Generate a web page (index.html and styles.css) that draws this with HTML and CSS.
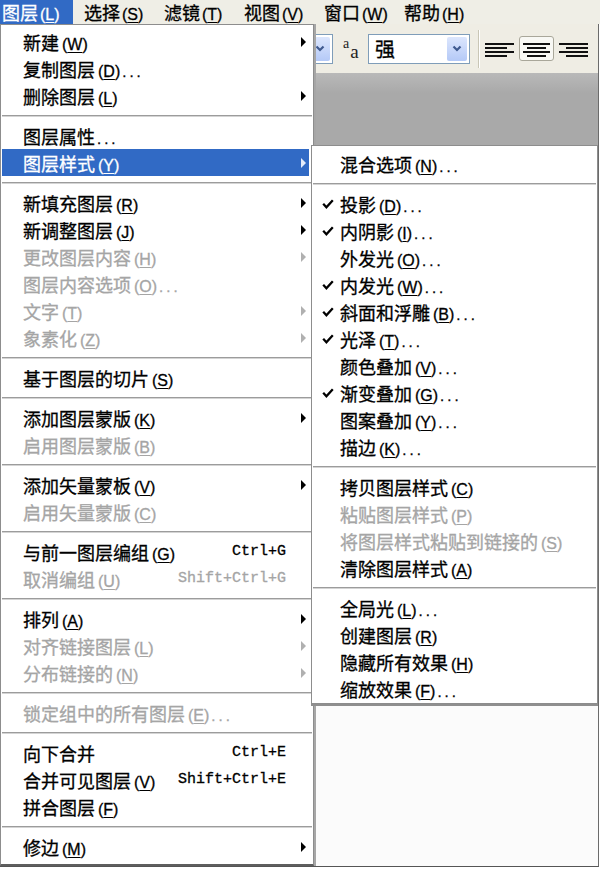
FILE: index.html
```html
<!DOCTYPE html>
<html lang="zh-CN">
  <head>
    <meta charset="UTF-8" />
    <meta name="viewport" content="width=device-width, initial-scale=1.0" />
    <title>图层菜单</title>
    <link rel="stylesheet" href="styles.css">
  </head>
  <body>
    <div class="menubar">
      <span class="mb-item active">图层<span class="k">(<u>L</u>)</span></span>
      <span class="mb-item">选择<span class="k">(<u>S</u>)</span></span>
      <span class="mb-item">滤镜<span class="k">(<u>T</u>)</span></span>
      <span class="mb-item">视图<span class="k">(<u>V</u>)</span></span>
      <span class="mb-item">窗口<span class="k">(<u>W</u>)</span></span>
      <span class="mb-item">帮助<span class="k">(<u>H</u>)</span></span>
    </div>

    <div class="toolbar">
      <div class="combo first">
        <span class="combo-btn"><svg width="10" height="7" viewBox="0 0 10 7"><path d="M1.5 1.5 L5 5 L8.5 1.5" fill="none" stroke="#3f5a8f" stroke-width="2.2"/></svg></span>
      </div>
      <span class="aa"><span class="a-sm">a</span><span class="a-lg">a</span></span>
      <div class="combo font">
        <span class="combo-text">强</span>
        <span class="combo-btn"><svg width="10" height="7" viewBox="0 0 10 7"><path d="M1.5 1.5 L5 5 L8.5 1.5" fill="none" stroke="#3f5a8f" stroke-width="2.2"/></svg></span>
      </div>
      <span class="tb-sep"></span>
      <span class="align-btn">
        <svg width="31" height="25" viewBox="0 0 31 25"><rect x="1" y="7" width="29" height="2"/><rect x="1" y="11" width="22" height="2"/><rect x="1" y="15" width="29" height="2"/><rect x="1" y="19" width="22" height="2"/></svg>
      </span>
      <span class="align-btn pressed">
        <svg width="31" height="23" viewBox="0 0 31 23"><rect x="2" y="6" width="27" height="2"/><rect x="6" y="10" width="19" height="2"/><rect x="2" y="14" width="27" height="2"/><rect x="6" y="18" width="19" height="2"/></svg>
      </span>
      <span class="align-btn">
        <svg width="31" height="25" viewBox="0 0 31 25"><rect x="1" y="7" width="29" height="2"/><rect x="8" y="11" width="22" height="2"/><rect x="1" y="15" width="29" height="2"/><rect x="8" y="19" width="22" height="2"/></svg>
      </span>
    </div>

    <div class="workspace">
      <div class="gray"></div>
      <div class="doc"></div>
    </div>

    <div class="menu main">
      <div class="item"><span class="label">新建<span class="k">(<u>W</u>)</span></span><span class="ar"><i></i></span></div>
      <div class="item"><span class="label">复制图层<span class="k">(<u>D</u>)</span><span class="dots">...</span></span><span class="ar"></span></div>
      <div class="item"><span class="label">删除图层<span class="k">(<u>L</u>)</span></span><span class="ar"><i></i></span></div>
      <div class="sep"></div>
      <div class="item"><span class="label">图层属性<span class="dots">...</span></span><span class="ar"></span></div>
      <div class="item hot"><span class="label">图层样式<span class="k">(<u>Y</u>)</span></span><span class="ar"><i></i></span></div>
      <div class="sep"></div>
      <div class="item"><span class="label">新填充图层<span class="k">(<u>R</u>)</span></span><span class="ar"><i></i></span></div>
      <div class="item"><span class="label">新调整图层<span class="k">(<u>J</u>)</span></span><span class="ar"><i></i></span></div>
      <div class="item off"><span class="label">更改图层内容<span class="k">(<u>H</u>)</span></span><span class="ar"><i></i></span></div>
      <div class="item off"><span class="label">图层内容选项<span class="k">(<u>O</u>)</span><span class="dots">...</span></span><span class="ar"></span></div>
      <div class="item off"><span class="label">文字<span class="k">(<u>T</u>)</span></span><span class="ar"><i></i></span></div>
      <div class="item off"><span class="label">象素化<span class="k">(<u>Z</u>)</span></span><span class="ar"><i></i></span></div>
      <div class="sep"></div>
      <div class="item"><span class="label">基于图层的切片<span class="k">(<u>S</u>)</span></span><span class="ar"></span></div>
      <div class="sep"></div>
      <div class="item"><span class="label">添加图层蒙版<span class="k">(<u>K</u>)</span></span><span class="ar"><i></i></span></div>
      <div class="item off"><span class="label">启用图层蒙版<span class="k">(<u>B</u>)</span></span><span class="ar"></span></div>
      <div class="sep"></div>
      <div class="item"><span class="label">添加矢量蒙板<span class="k">(<u>V</u>)</span></span><span class="ar"><i></i></span></div>
      <div class="item off"><span class="label">启用矢量蒙版<span class="k">(<u>C</u>)</span></span><span class="ar"></span></div>
      <div class="sep"></div>
      <div class="item"><span class="label">与前一图层编组<span class="k">(<u>G</u>)</span></span><span class="sc">Ctrl+G</span><span class="ar"></span></div>
      <div class="item off"><span class="label">取消编组<span class="k">(<u>U</u>)</span></span><span class="sc">Shift+Ctrl+G</span><span class="ar"></span></div>
      <div class="sep"></div>
      <div class="item"><span class="label">排列<span class="k">(<u>A</u>)</span></span><span class="ar"><i></i></span></div>
      <div class="item off"><span class="label">对齐链接图层<span class="k">(<u>L</u>)</span></span><span class="ar"><i></i></span></div>
      <div class="item off"><span class="label">分布链接的<span class="k">(<u>N</u>)</span></span><span class="ar"><i></i></span></div>
      <div class="sep"></div>
      <div class="item off"><span class="label">锁定组中的所有图层<span class="k">(<u>E</u>)</span><span class="dots">...</span></span><span class="ar"></span></div>
      <div class="sep"></div>
      <div class="item"><span class="label">向下合并</span><span class="sc">Ctrl+E</span><span class="ar"></span></div>
      <div class="item"><span class="label">合并可见图层<span class="k">(<u>V</u>)</span></span><span class="sc">Shift+Ctrl+E</span><span class="ar"></span></div>
      <div class="item"><span class="label">拼合图层<span class="k">(<u>F</u>)</span></span><span class="ar"></span></div>
      <div class="sep"></div>
      <div class="item"><span class="label">修边<span class="k">(<u>M</u>)</span></span><span class="ar"><i></i></span></div>
    </div>

    <div class="menu sub">
      <div class="item"><span class="chk"></span><span class="label">混合选项<span class="k">(<u>N</u>)</span><span class="dots">...</span></span></div>
      <div class="sep"></div>
      <div class="item"><span class="chk on"><svg width="12" height="10" viewBox="0 0 12 10"><path d="M1.2 4.8 L4.4 8.2 L10.8 1.2" fill="none" stroke="#000" stroke-width="2.3"/></svg></span><span class="label">投影<span class="k">(<u>D</u>)</span><span class="dots">...</span></span></div>
      <div class="item"><span class="chk on"><svg width="12" height="10" viewBox="0 0 12 10"><path d="M1.2 4.8 L4.4 8.2 L10.8 1.2" fill="none" stroke="#000" stroke-width="2.3"/></svg></span><span class="label">内阴影<span class="k">(<u>I</u>)</span><span class="dots">...</span></span></div>
      <div class="item"><span class="chk"></span><span class="label">外发光<span class="k">(<u>O</u>)</span><span class="dots">...</span></span></div>
      <div class="item"><span class="chk on"><svg width="12" height="10" viewBox="0 0 12 10"><path d="M1.2 4.8 L4.4 8.2 L10.8 1.2" fill="none" stroke="#000" stroke-width="2.3"/></svg></span><span class="label">内发光<span class="k">(<u>W</u>)</span><span class="dots">...</span></span></div>
      <div class="item"><span class="chk on"><svg width="12" height="10" viewBox="0 0 12 10"><path d="M1.2 4.8 L4.4 8.2 L10.8 1.2" fill="none" stroke="#000" stroke-width="2.3"/></svg></span><span class="label">斜面和浮雕<span class="k">(<u>B</u>)</span><span class="dots">...</span></span></div>
      <div class="item"><span class="chk on"><svg width="12" height="10" viewBox="0 0 12 10"><path d="M1.2 4.8 L4.4 8.2 L10.8 1.2" fill="none" stroke="#000" stroke-width="2.3"/></svg></span><span class="label">光泽<span class="k">(<u>T</u>)</span><span class="dots">...</span></span></div>
      <div class="item"><span class="chk"></span><span class="label">颜色叠加<span class="k">(<u>V</u>)</span><span class="dots">...</span></span></div>
      <div class="item"><span class="chk on"><svg width="12" height="10" viewBox="0 0 12 10"><path d="M1.2 4.8 L4.4 8.2 L10.8 1.2" fill="none" stroke="#000" stroke-width="2.3"/></svg></span><span class="label">渐变叠加<span class="k">(<u>G</u>)</span><span class="dots">...</span></span></div>
      <div class="item"><span class="chk"></span><span class="label">图案叠加<span class="k">(<u>Y</u>)</span><span class="dots">...</span></span></div>
      <div class="item"><span class="chk"></span><span class="label">描边<span class="k">(<u>K</u>)</span><span class="dots">...</span></span></div>
      <div class="sep"></div>
      <div class="item"><span class="chk"></span><span class="label">拷贝图层样式<span class="k">(<u>C</u>)</span></span></div>
      <div class="item off"><span class="chk"></span><span class="label">粘贴图层样式<span class="k">(<u>P</u>)</span></span></div>
      <div class="item off"><span class="chk"></span><span class="label">将图层样式粘贴到链接的<span class="k">(<u>S</u>)</span></span></div>
      <div class="item"><span class="chk"></span><span class="label">清除图层样式<span class="k">(<u>A</u>)</span></span></div>
      <div class="sep"></div>
      <div class="item"><span class="chk"></span><span class="label">全局光<span class="k">(<u>L</u>)</span><span class="dots">...</span></span></div>
      <div class="item"><span class="chk"></span><span class="label">创建图层<span class="k">(<u>R</u>)</span></span></div>
      <div class="item"><span class="chk"></span><span class="label">隐藏所有效果<span class="k">(<u>H</u>)</span></span></div>
      <div class="item"><span class="chk"></span><span class="label">缩放效果<span class="k">(<u>F</u>)</span><span class="dots">...</span></span></div>
    </div>
  </body>
</html>
```

FILE: styles.css
```css
* {
  box-sizing: border-box;
}

body {
  margin: 0;
  width: 600px;
  height: 869px;
  background: #ffffff;
  font-family: "Noto Sans CJK SC", sans-serif;
  color: #000;
  overflow: hidden;
  position: relative;
}

u {
  text-decoration-thickness: 1px;
  text-underline-offset: 2px;
}

/* menu bar */
.menubar {
  height: 24px;
  display: flex;
  background: #efeee6;
  font-size: 18px;
  line-height: 24px;
  -webkit-text-stroke: 0.3px currentColor;
}

.mb-item {
  width: 80px;
  padding-left: 2px;
  white-space: nowrap;
}

.mb-item.active {
  width: 73px;
  margin-right: 9px;
  background: #316ac5;
  color: #fff;
}

.k {
  font-family: "Liberation Sans", sans-serif;
  font-size: 16px;
  margin-left: 3px;
}

.menubar .k {
  margin-left: 2px;
}

.dots {
  font-family: "Liberation Sans", sans-serif;
  font-size: 15px;
  letter-spacing: 3px;
  margin-left: 2px;
}

/* tool options bar */
.toolbar {
  width: 599px;
  height: 49px;
  display: flex;
  align-items: center;
  background: #efede4;
  border-right: 1px solid #6b6b6b;
}

.combo {
  height: 30px;
  display: flex;
  align-items: center;
  padding: 2px;
  background: #fff;
  border: 1px solid #7f9db9;
}

.combo.first {
  width: 100px;
  margin-left: 233px;
}

.combo.font {
  width: 102px;
  margin-left: 3px;
}

.combo-text {
  font-size: 20px;
  line-height: 24px;
  padding-left: 4px;
  -webkit-text-stroke: 0.3px #000;
}

.combo-btn {
  margin-left: auto;
  width: 20px;
  height: 24px;
  display: flex;
  align-items: center;
  justify-content: center;
  border-radius: 2px;
  background: linear-gradient(#dce6fd, #b4c9f7);
}

.aa {
  width: 22px;
  height: 22px;
  margin-left: 10px;
  display: flex;
  align-items: flex-start;
  font-family: "Liberation Serif", serif;
  color: #222;
}

.a-sm {
  font-size: 14px;
  line-height: 12px;
}

.a-lg {
  font-size: 19px;
  line-height: 14px;
  margin-top: 7px;
  margin-left: 1px;
}

.tb-sep {
  width: 2px;
  height: 38px;
  margin-left: 8px;
  border-left: 1px solid #c9c6b6;
  border-right: 1px solid #fff;
}

.align-btn {
  width: 31px;
  height: 25px;
  margin-left: 4px;
  display: flex;
  align-items: center;
  justify-content: center;
}

.align-btn:nth-of-type(1) {
  margin-left: 12px;
}

.align-btn svg {
  fill: #111;
}

.align-btn.pressed {
  width: 35px;
  border: 1px solid #a9a79a;
  border-radius: 3px;
  background: #f8f8f4;
}

/* work area */
.workspace {
  width: 599px;
  height: 794px;
  display: flex;
  flex-direction: column;
  border-right: 1px solid #6b6b6b;
  border-bottom: 1px solid #555;
}

.gray {
  height: 73px;
  background: linear-gradient(#b9b9b9, #a9a9a9 20px);
}

.doc {
  flex: 1;
  background: #fbfbfb;
}

/* drop-down menus */
.menu {
  position: absolute;
  background: #fff;
  border: 1px solid #8d8d8d;
  font-size: 18px;
}

.menu.main {
  left: 0;
  top: 24px;
  width: 314px;
  height: 842px;
  padding-top: 3px;
  border-bottom: 2px solid #5e5e5e;
  box-shadow: 2px 0 0 #a6a6a6;
}

.menu.sub {
  left: 311px;
  top: 145px;
  width: 287px;
  padding: 4px 0 1px;
  box-shadow: 0 2px 0 #8f8f8f;
}

.item {
  height: 27px;
  display: flex;
  align-items: center;
  margin: 0 4px 0 1px;
  padding: 0 3px 0 21px;
  white-space: nowrap;
}

.sub .item {
  margin: 0 1px;
  padding-left: 9px;
}

.label {
  flex: 1;
  -webkit-text-stroke: 0.3px currentColor;
}

.sc {
  font-family: "Liberation Mono", monospace;
  font-size: 15px;
  -webkit-text-stroke: 0.3px currentColor;
}

.ar {
  width: 20px;
  display: flex;
  justify-content: flex-end;
}

.ar i {
  width: 0;
  height: 0;
  border-left: 5px solid #000;
  border-top: 5px solid transparent;
  border-bottom: 5px solid transparent;
}

.chk {
  width: 18px;
  display: flex;
  align-items: center;
}

.item.off {
  color: #a5a5a5;
}

.item.off .ar i {
  border-left-color: #b0b0b0;
}

.item.hot {
  background: #316ac5;
  color: #fff;
}

.item.hot .ar i {
  border-left-color: #e4ecfa;
}

.sep {
  height: 13px;
  margin: 0 1px;
  display: flex;
  align-items: center;
}

.sep::before {
  content: "";
  flex: 1;
  height: 1px;
  background: #9c9c9c;
  box-shadow: 0 1px 0 #d4d4d4;
}
```
